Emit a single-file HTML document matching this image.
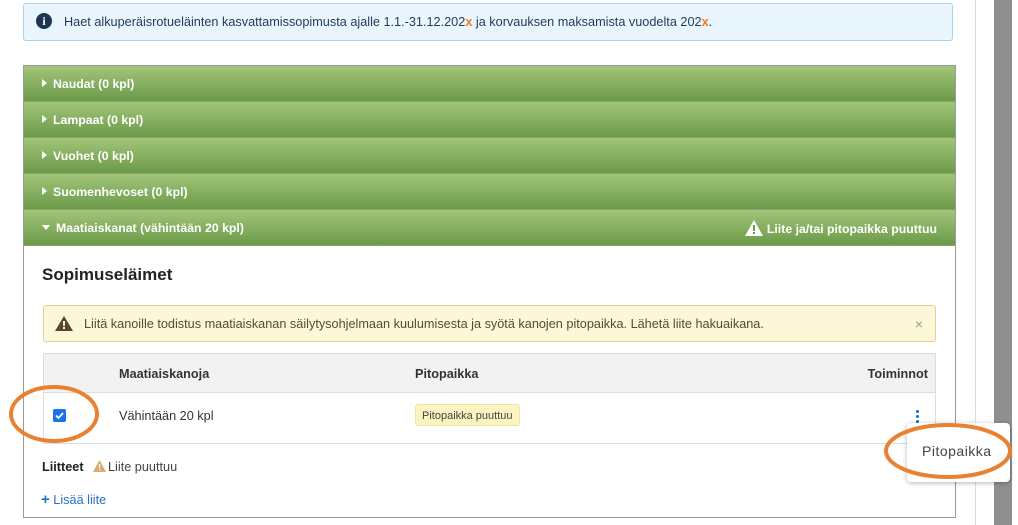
<!DOCTYPE html>
<html><head><meta charset="utf-8"><style>
*{box-sizing:border-box;margin:0;padding:0}
body{width:1018px;height:525px;background:#fff;font-family:"Liberation Sans",sans-serif;position:relative;overflow:hidden;color:#333}
.a{position:absolute}
.info{left:23px;top:3px;width:930px;height:38px;background:#e9f5fc;border:1px solid #a9d3ec;border-radius:3px;font-size:12.7px;color:#1f3c5a;padding:11px 0 0 40px}
.info .ic{position:absolute;left:12px;top:9px;width:16px;height:16px;border-radius:50%;background:#1f3550;color:#fff;font-size:12px;font-weight:bold;text-align:center;line-height:16px;font-family:"Liberation Serif",serif}
.x{color:#f07d22;font-weight:bold}
.panel{left:23px;top:65px;width:933px;height:453px;border:1px solid #9a9a9a}
.row{position:absolute;left:0;width:931px;height:36px;background:linear-gradient(#a2c57a,#6b9a48);border-bottom:1px solid #87a86a;color:#fff;font-weight:bold;font-size:12.3px;padding:11px 0 0 18px}
.row .t{display:inline-block;width:0;height:0;border-left:5px solid #fff;border-top:4px solid transparent;border-bottom:4px solid transparent;margin-right:6px;vertical-align:1px}
.row .d{display:inline-block;width:0;height:0;border-top:5px solid #fff;border-left:4px solid transparent;border-right:4px solid transparent;margin-right:6px;vertical-align:2px}
</style></head><body>
<div class="a info"><span class="ic">i</span>Haet alkuperäisrotueläinten kasvattamissopimusta ajalle 1.1.-31.12.202<span class="x">x</span> ja korvauksen maksamista vuodelta 202<span class="x">x</span>.</div>
<div class="a panel">
<div class="row" style="top:0"><span class="t"></span>Naudat (0 kpl)</div>
<div class="row" style="top:36px"><span class="t"></span>Lampaat (0 kpl)</div>
<div class="row" style="top:72px"><span class="t"></span>Vuohet (0 kpl)</div>
<div class="row" style="top:108px"><span class="t"></span>Suomenhevoset (0 kpl)</div>
<div class="row" style="top:144px;height:36px"><span class="d"></span>Maatiaiskanat (vähintään 20 kpl)
<span style="position:absolute;right:18px;top:10px"><svg width="18" height="16" viewBox="0 0 18 16" style="vertical-align:-3px;margin-right:4px"><path d="M9 0L18 16H0Z" fill="#fff"/><rect x="8" y="5" width="2" height="6" fill="#6b9a48"/><rect x="8" y="12" width="2" height="2" fill="#6b9a48"/></svg>Liite ja/tai pitopaikka puuttuu</span></div>
</div>
<div class="a" style="left:42px;top:265px;font-size:17px;font-weight:bold;color:#222">Sopimuseläimet</div>
<div class="a" style="left:43px;top:305px;width:893px;height:37px;background:#fcf7d9;border:1px solid #e3cf96;border-radius:3px;font-size:12.7px;color:#5a4a2a;padding:11px 0 0 40px">
<svg class="a" style="left:11px;top:10px" width="18" height="15" viewBox="0 0 18 15"><path d="M9 0L18 15H0Z" fill="#5a4528"/><rect x="8" y="5" width="2" height="5" fill="#fcf7d9"/><rect x="8" y="11" width="2" height="2" fill="#fcf7d9"/></svg>
Liitä kanoille todistus maatiaiskanan säilytysohjelmaan kuulumisesta ja syötä kanojen pitopaikka. Lähetä liite hakuaikana.
<span class="a" style="right:12px;top:10px;color:#999;font-size:14px">×</span></div>
<div class="a" style="left:43px;top:353px;width:893px;height:91px;border:1px solid #ddd">
<div class="a" style="left:0;top:0;width:891px;height:39px;background:#f2f2f2;border-bottom:1px solid #ddd;font-size:12.7px;font-weight:bold;color:#333">
<span class="a" style="left:75px;top:13px">Maatiaiskanoja</span><span class="a" style="left:371px;top:13px">Pitopaikka</span><span class="a" style="right:7px;top:13px">Toiminnot</span></div>
<div class="a" style="left:9px;top:55px;width:13px;height:13px;background:#1a73e8;border-radius:2px"><svg width="13" height="13"><path d="M3 6.5L5.5 9L10 4" stroke="#fff" stroke-width="1.8" fill="none"/></svg></div>
<span class="a" style="left:75px;top:55px;font-size:12.7px;color:#333">Vähintään 20 kpl</span>
<span class="a" style="left:371px;top:50px;height:22px;padding:5px 6px 0;background:#fbf3c0;border:1px solid #efe3a0;border-radius:3px;font-size:11px;color:#444">Pitopaikka puuttuu</span>
<div class="a" style="left:872px;top:55px;width:3px;height:14px;background:radial-gradient(circle,#1a6fd0 1.4px,transparent 1.6px) 0 0/3px 5px repeat-y"></div>
</div>
<span class="a" style="left:42px;top:460px;font-size:12.7px;font-weight:bold;color:#222">Liitteet</span>
<span class="a" style="left:93px;top:460px;font-size:12.7px;color:#444"><svg width="13" height="12" viewBox="0 0 13 12" style="vertical-align:-1px;margin-right:2px"><path d="M6.5 0L13 12H0Z" fill="#d4ae72"/><rect x="6" y="4" width="1.2" height="4" fill="#fff"/><rect x="6" y="9" width="1.2" height="1.2" fill="#fff"/></svg>Liite puuttuu</span>
<span class="a" style="left:41px;top:491px;font-size:12.7px;color:#2a6fc9"><b style="font-size:15px">+</b> Lisää liite</span>
<div class="a" style="left:975px;top:0;width:1px;height:525px;background:#ddd"></div>
<div class="a" style="left:994px;top:0;width:18px;height:525px;background:#8f8f8f"></div>
<div class="a" style="left:907px;top:423px;width:103px;height:59px;background:#fff;border-radius:4px;box-shadow:0 1px 5px rgba(0,0,0,.3);font-size:14px;color:#444;padding:20px 0 0 15px;letter-spacing:.5px">Pitopaikka</div>
<svg class="a" style="left:0;top:0" width="1018" height="525"><ellipse cx="54" cy="414" rx="43" ry="27" fill="none" stroke="#ea8130" stroke-width="4"/><ellipse cx="948" cy="451" rx="62" ry="26" fill="none" stroke="#ea8130" stroke-width="4"/></svg>
</body></html>
